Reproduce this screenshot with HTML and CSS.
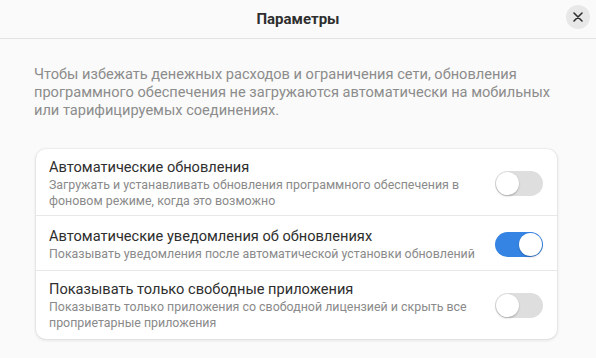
FILE: index.html
```html
<!DOCTYPE html>
<html lang="ru">
<head>
  <meta charset="UTF-8">
  <title>Параметры</title>
  <link rel="stylesheet" href="styles.css">
</head>
<body>
  <div class="window">
    <div class="headerbar">
      <span class="title">Параметры</span>
      <button class="close-btn" title="Закрыть">
        <svg width="10" height="10" viewBox="0 0 10 10">
          <path d="M1 1 L9 9 M9 1 L1 9" stroke="#2e2e2e" stroke-width="1.6" stroke-linecap="round"/>
        </svg>
      </button>
    </div>

    <div class="content">
      <p class="description">
        Чтобы избежать денежных расходов и ограничения сети, обновления
        программного обеспечения не загружаются автоматически на мобильных
        или тарифицируемых соединениях.
      </p>

      <div class="boxed-list">
        <div class="row">
          <div class="row-text">
            <div class="row-title">Автоматические обновления</div>
            <div class="row-subtitle">Загружать и устанавливать обновления программного обеспечения в фоновом режиме, когда это возможно</div>
          </div>
          <div class="switch"><span class="knob"></span></div>
        </div>
        <div class="row">
          <div class="row-text">
            <div class="row-title">Автоматические уведомления об обновлениях</div>
            <div class="row-subtitle">Показывать уведомления после автоматической установки обновлений</div>
          </div>
          <div class="switch on"><span class="knob"></span></div>
        </div>
        <div class="row">
          <div class="row-text">
            <div class="row-title">Показывать только свободные приложения</div>
            <div class="row-subtitle">Показывать только приложения со свободной лицензией и скрыть все проприетарные приложения</div>
          </div>
          <div class="switch"><span class="knob"></span></div>
        </div>
      </div>
    </div>
  </div>
</body>
</html>
```

FILE: styles.css
```css
body {
  margin: 0;
  font-family: Roboto, "Noto Sans", sans-serif;
  background-color: #fafafa;
  color: #2e2e2e;
}

.window {
  width: 596px;
  height: 358px;
  overflow: hidden;
}

.headerbar {
  height: 38px;
  border-bottom: 1px solid #e3e3e3;
  display: flex;
  align-items: center;
  justify-content: center;
  position: relative;
}

.title {
  font-weight: bold;
  font-size: 15px;
}

.close-btn {
  position: absolute;
  right: 6px;
  top: 5px;
  width: 24px;
  height: 24px;
  border-radius: 50%;
  border: none;
  padding: 0;
  background-color: #e8e8e8;
  display: flex;
  align-items: center;
  justify-content: center;
}

.content {
  padding: 26px 39px 0 34px;
}

.description {
  margin: 0 0 30px 0;
  font-size: 14.6px;
  line-height: 18px;
  color: #8c8c8c;
}

.boxed-list {
  background-color: #ffffff;
  border-radius: 10px;
  box-shadow: 0 0 0 1px rgba(0, 0, 0, 0.03), 0 1px 3px 1px rgba(0, 0, 0, 0.07);
  margin-left: 2px;
}

.row {
  display: flex;
  align-items: center;
  padding: 8px 14px 6px 13px;
  min-height: 40px;
  border-bottom: 1px solid #e8e8e8;
}

.row:last-child {
  border-bottom: none;
  padding-bottom: 8px;
}

.row-text {
  flex: 1;
  margin-right: 14px;
}

.row-title {
  font-size: 14.6px;
  line-height: 20px;
}

.row-subtitle {
  font-size: 12.4px;
  line-height: 16px;
  color: #8a8a8a;
}

.switch {
  width: 48px;
  height: 25px;
  border-radius: 13px;
  background-color: #dedede;
  flex-shrink: 0;
  display: flex;
  align-items: center;
  padding: 0 1px;
  box-sizing: border-box;
}

.knob {
  width: 23px;
  height: 23px;
  border-radius: 50%;
  background-color: #ffffff;
  box-shadow: 0 1px 2px rgba(0, 0, 0, 0.25);
}

.switch.on {
  background-color: #3584e4;
  justify-content: flex-end;
}
```
